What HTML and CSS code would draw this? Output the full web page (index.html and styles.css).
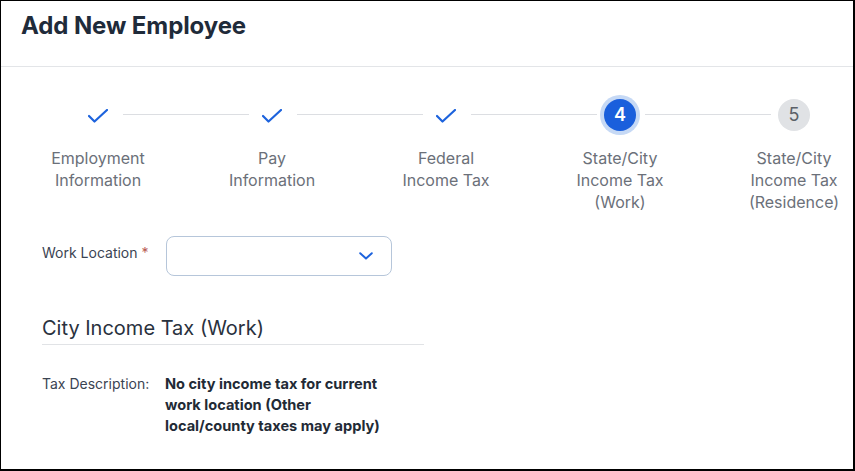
FILE: index.html
```html
<!DOCTYPE html>
<html lang="en">
<head>
<meta charset="utf-8">
<title>Add New Employee</title>
<link rel="stylesheet" href="styles.css">
</head>
<body>
<div class="frame">
  <header class="header">
    <h1 class="title">Add New Employee</h1>
  </header>

  <ol class="stepper">
    <li class="step done">
      <div class="step-head">
        <span class="marker"><svg class="check" width="20" height="14" viewBox="0 0 20 14"><path d="M1 7 L6.5 12.5 L19 1" fill="none" stroke="#1d63dd" stroke-width="2.2" stroke-linecap="round" stroke-linejoin="round"/></svg></span>
        <span class="connector"></span>
      </div>
      <div class="label">Employment<br>Information</div>
    </li>
    <li class="step done">
      <div class="step-head">
        <span class="marker"><svg class="check" width="20" height="14" viewBox="0 0 20 14"><path d="M1 7 L6.5 12.5 L19 1" fill="none" stroke="#1d63dd" stroke-width="2.2" stroke-linecap="round" stroke-linejoin="round"/></svg></span>
        <span class="connector"></span>
      </div>
      <div class="label">Pay<br>Information</div>
    </li>
    <li class="step done">
      <div class="step-head">
        <span class="marker"><svg class="check" width="20" height="14" viewBox="0 0 20 14"><path d="M1 7 L6.5 12.5 L19 1" fill="none" stroke="#1d63dd" stroke-width="2.2" stroke-linecap="round" stroke-linejoin="round"/></svg></span>
        <span class="connector"></span>
      </div>
      <div class="label">Federal<br>Income Tax</div>
    </li>
    <li class="step active">
      <div class="step-head">
        <span class="marker"><span class="num">4</span></span>
        <span class="connector"></span>
      </div>
      <div class="label">State/City<br>Income Tax<br>(Work)</div>
    </li>
    <li class="step todo">
      <div class="step-head">
        <span class="marker"><span class="num">5</span></span>
      </div>
      <div class="label">State/City<br>Income Tax<br>(Residence)</div>
    </li>
  </ol>

  <div class="form">
    <div class="field-row">
      <label class="field-label">Work Location <span class="req">*</span></label>
      <div class="select">
        <svg class="chevron" width="14" height="8" viewBox="0 0 14 8"><path d="M1.2 1.2 L7 6.6 L12.8 1.2" fill="none" stroke="#1d63dd" stroke-width="2" stroke-linecap="round" stroke-linejoin="round"/></svg>
      </div>
    </div>

    <h2 class="section-title">City Income Tax (Work)</h2>

    <div class="desc-row">
      <div class="desc-label">Tax Description:</div>
      <div class="desc-value">No city income tax for current<br>work location (Other<br>local/county taxes may apply)</div>
    </div>
  </div>
</div>
</body>
</html>
```

FILE: styles.css
```css
* { box-sizing: border-box; }

html, body {
  margin: 0;
  padding: 0;
  background: #ffffff;
}

body {
  font-family: Inter, "Noto Sans", "Liberation Sans", sans-serif;
  overflow: hidden;
}

.frame {
  width: 855px;
  height: 471px;
  border-top: 1px solid #000;
  border-left: 1px solid #000;
  border-right: 2px solid #000;
  border-bottom: 2px solid #000;
  overflow: hidden;
  background: #fff;
}

.header {
  height: 66px;
  border-bottom: 1px solid #e3e5e8;
  padding: 9px 20px 0;
}

.title {
  margin: 0;
  font-size: 24px;
  line-height: 32px;
  font-weight: 700;
  color: #1f2b3a;
  letter-spacing: -0.1px;
}

.stepper {
  list-style: none;
  margin: 0;
  padding: 24px 0 0 10px;
  display: grid;
  grid-template-columns: repeat(5, 174px);
  width: 890px;
}

.step {
  display: flex;
  flex-direction: column;
  align-items: center;
}

.step-head {
  position: relative;
  width: 48px;
  height: 48px;
  display: flex;
  align-items: center;
  justify-content: center;
}

.marker {
  display: flex;
  align-items: center;
  justify-content: center;
  width: 32px;
  height: 32px;
  border-radius: 50%;
}

.check { display: block; margin-top: 1px; }

.connector {
  position: absolute;
  left: 49px;
  top: 23px;
  width: 126px;
  height: 1px;
  background: #dcdee2;
}

.step.active .marker {
  background: #1a5fdc;
  box-shadow: 0 0 0 4px #c6d9f5;
  color: #fff;
}

.step.todo .marker {
  background: #e0e2e5;
  color: #5b6068;
}

.num {
  font-size: 18px;
  line-height: 1;
  font-weight: 400;
}

.step.active .num { font-weight: 600; }

.label {
  margin-top: 8px;
  text-align: center;
  font-size: 16px;
  line-height: 22px;
  color: #6b7079;
}

.form {
  padding: 23px 0 0 41px;
}

.field-row {
  display: flex;
  align-items: flex-start;
}

.field-label {
  width: 124px;
  padding-top: 8px;
  font-size: 14px;
  line-height: 18px;
  color: #3b4452;
}

.req { color: #b85a52; }

.select {
  width: 226px;
  height: 40px;
  border: 1px solid #b6c6da;
  border-radius: 8px;
  display: flex;
  align-items: center;
  justify-content: flex-end;
  padding-right: 18px;
}

.chevron { display: block; }

.section-title {
  margin: 38px 0 0;
  width: 382px;
  font-size: 20px;
  line-height: 28px;
  font-weight: 400;
  color: #29313d;
  padding-bottom: 2px;
  border-bottom: 1px solid #e1e3e6;
}

.desc-row {
  display: flex;
  margin-top: 30px;
}

.desc-label {
  width: 123px;
  font-size: 14px;
  line-height: 18px;
  color: #3b4452;
}

.desc-value {
  font-size: 14.6px;
  line-height: 21px;
  font-weight: 700;
  color: #222a35;
  margin-top: -1px;
}
```
